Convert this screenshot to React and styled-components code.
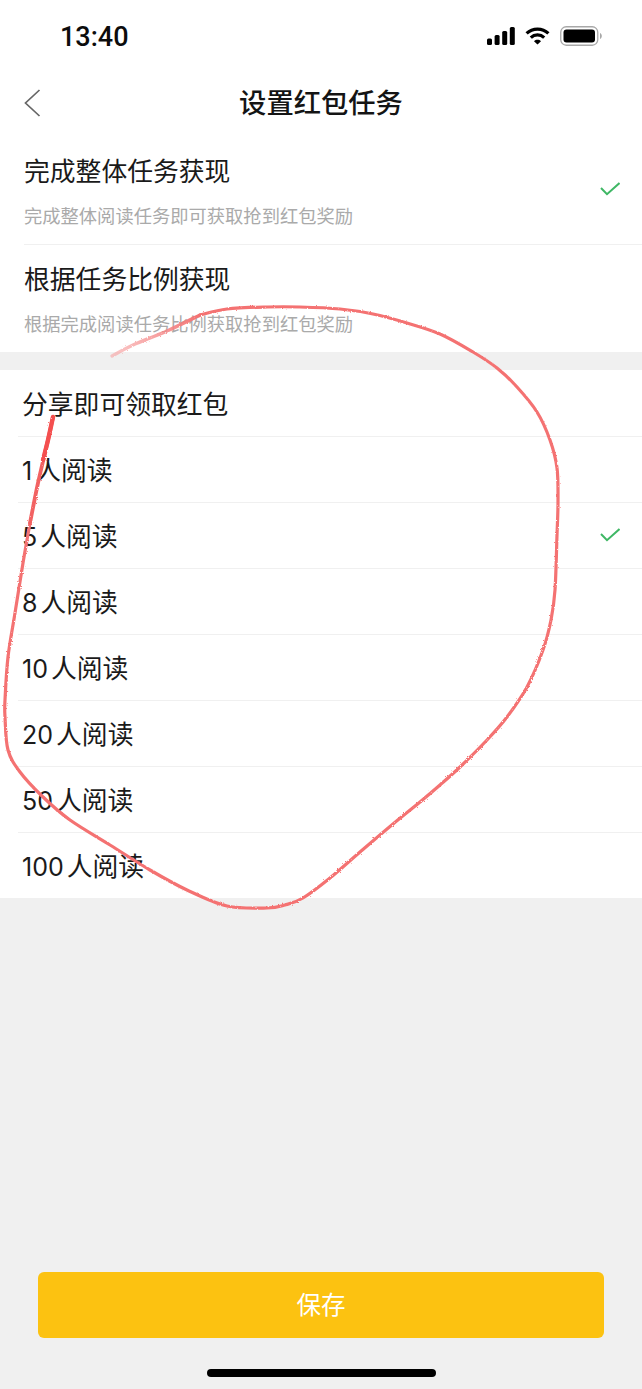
import React from "react";
import styled, { createGlobalStyle } from "styled-components";

const GlobalStyle = createGlobalStyle`
  html, body {
    margin: 0;
    padding: 0;
    background: #f0f0f0;
  }
  * {
    box-sizing: border-box;
  }
`;

const Page = styled.div`
  position: relative;
  display: flex;
  flex-direction: column;
  width: 642px;
  height: 1389px;
  overflow: hidden;
  background: #f0f0f0;
  color: #1a1a1a;
  font-family: "Inter", "Noto Sans CJK SC", sans-serif;
`;

const Header = styled.header`
  background: #fff;
`;

const StatusBar = styled.div`
  display: flex;
  align-items: center;
  justify-content: space-between;
  height: 70px;
  padding: 2px 40px 0 60px;
`;

const Time = styled.span`
  padding-top: 2px;
  font-family: "Roboto", sans-serif;
  font-size: 27px;
  font-weight: 500;
  color: #0c0c0c;
`;

const StatusIcons = styled.div`
  display: flex;
  align-items: center;
  gap: 10px;
`;

const Nav = styled.div`
  display: grid;
  grid-template-columns: 64px 1fr 64px;
  align-items: center;
  height: 66px;
`;

const BackButton = styled.button`
  display: flex;
  align-items: center;
  height: 100%;
  padding: 0 0 0 24px;
  border: 0;
  background: none;
`;

const NavTitle = styled.h1`
  margin: 0;
  padding-top: 2px;
  font-size: 27.3px;
  font-weight: 500;
  line-height: 36px;
  text-align: center;
  color: #141414;
`;

const Section = styled.section`
  background: #fff;
  margin-bottom: ${(p) => p.$gap || 0}px;
`;

const Row = styled.div`
  display: flex;
  align-items: center;
  justify-content: space-between;
  height: ${(p) => p.$height}px;
  margin-left: ${(p) => p.$inset}px;
  padding: ${(p) => p.$top || 0}px 22px 0 ${(p) => p.$pad || 0}px;
  border-top: 1px solid #f0f0f0;
  &:first-child {
    border-top-color: transparent;
  }
`;

const RowText = styled.div`
  display: flex;
  flex-direction: column;
  gap: 14px;
`;

const RowTitle = styled.span`
  font-size: 25.8px;
  line-height: 36px;
  color: #1a1a1a;
`;

const RowHint = styled.span`
  font-size: 18.3px;
  line-height: 24px;
  color: #aaa;
`;

const Count = styled.span`
  margin-right: 3px;
  font-size: 25px;
`;

const Footer = styled.footer`
  display: flex;
  flex-direction: column;
  align-items: center;
  margin-top: auto;
  padding: 0 38px 12px;
`;

const SaveButton = styled.button`
  width: 100%;
  height: 66px;
  padding: 0 0 4px;
  border: 0;
  border-radius: 6px;
  background: #fcc211;
  color: #fff;
  font-family: inherit;
  font-size: 24.5px;
`;

const HomeBar = styled.div`
  width: 229px;
  height: 8px;
  margin-top: 31px;
  border-radius: 4px;
  background: #000;
`;

const Scribble = styled.svg`
  position: absolute;
  top: 0;
  left: 0;
  pointer-events: none;
`;

const CheckMark = styled.svg`
  margin-bottom: 3px;
`;

const Signal = () => (
  <svg width="28.5" height="18" viewBox="0 0 28.5 18">
    <rect x="0" y="11.5" width="5" height="6.5" rx="1.5" fill="#000" />
    <rect x="7.6" y="8" width="5" height="10" rx="1.5" fill="#000" />
    <rect x="15.2" y="4" width="5" height="14" rx="1.5" fill="#000" />
    <rect x="22.8" y="0" width="5" height="18" rx="1.5" fill="#000" />
  </svg>
);

const Wifi = () => (
  <svg width="25" height="18" viewBox="0 0 25 18" fill="none" stroke="#000" strokeWidth="3.2">
    <path d="M1.6 6.4C7.6 0.7 17.4 0.7 23.4 6.4" />
    <path d="M5.8 10.6C9.6 7 15.4 7 19.2 10.6" />
    <path d="M9 14.2L12.5 17.6L16 14.2C14 12.3 11 12.3 9 14.2Z" fill="#000" stroke="none" />
  </svg>
);

const Battery = () => (
  <svg width="42" height="20" viewBox="0 0 42 20">
    <rect x="0.75" y="0.75" width="37" height="18.5" rx="5.5" fill="none" stroke="#a8a8a8" strokeWidth="1.3" />
    <rect x="3.5" y="3.5" width="31.5" height="13" rx="3" fill="#000" />
    <path d="M40 7C41.2 7.6 41.8 8.6 41.8 10C41.8 11.4 41.2 12.4 40 13Z" fill="#a8a8a8" />
  </svg>
);

const BackIcon = () => (
  <svg width="17" height="28" viewBox="0 0 17 28" fill="none" stroke="#666" strokeWidth="1.7">
    <path d="M15.5 1L1.5 14L15.5 27" />
  </svg>
);

const Check = () => (
  <CheckMark width="20" height="14" viewBox="0 0 20 14" fill="none" stroke="#3fb765" strokeWidth="2">
    <path d="M1 6L7 12.2L19.5 1" />
  </CheckMark>
);

// points read off the hand drawn ring, in page pixels
const ring = [
  [200, 315], [227, 309], [267, 307], [300, 307], [340, 309], [373, 314], [407, 323], [440, 334],
  [473, 352], [497, 368], [517, 387], [537, 412], [550, 440], [557, 468], [558, 502], [557, 535],
  [555, 590], [551, 620], [543, 650], [527, 687], [507, 717], [487, 740], [460, 767], [440, 785],
  [420, 802], [393, 824], [360, 852], [330, 878], [303, 898], [285, 905], [267, 908], [227, 906],
  [187, 890], [150, 870], [110, 845], [70, 820], [43, 797], [20, 772], [8, 750], [5, 717],
  [5, 700], [8, 657], [15, 613], [23, 563], [30, 523],
];
const ringEnd = [[30, 523], [38, 483], [48, 440], [53, 417]];
const ringTip = [[43, 460], [48, 440], [53, 417]];
const ringStart = [[112, 356], [133, 345], [167, 331], [200, 315]];

// catmull-rom through the points, so the line has no corners
const smooth = (pts) => {
  let d = `M${pts[0][0]} ${pts[0][1]}`;
  for (let i = 0; i < pts.length - 1; i++) {
    const p0 = pts[i - 1] || pts[i];
    const p1 = pts[i];
    const p2 = pts[i + 1];
    const p3 = pts[i + 2] || p2;
    const c1x = p1[0] + (p2[0] - p0[0]) / 6;
    const c1y = p1[1] + (p2[1] - p0[1]) / 6;
    const c2x = p2[0] - (p3[0] - p1[0]) / 6;
    const c2y = p2[1] - (p3[1] - p1[1]) / 6;
    d += `C${c1x} ${c1y} ${c2x} ${c2y} ${p2[0]} ${p2[1]}`;
  }
  return d;
};

const tasks = [
  { title: "完成整体任务获现", hint: "完成整体阅读任务即可获取抢到红包奖励", checked: true },
  { title: "根据任务比例获现", hint: "根据完成阅读任务比例获取抢到红包奖励" },
];

const options = [
  { label: "分享即可领取红包" },
  { count: 1, label: "人阅读" },
  { count: 5, label: "人阅读", checked: true },
  { count: 8, label: "人阅读" },
  { count: 10, label: "人阅读" },
  { count: 20, label: "人阅读" },
  { count: 50, label: "人阅读" },
  { count: 100, label: "人阅读" },
];

export default function App() {
  return (
    <Page>
      <GlobalStyle />
      <Header>
        <StatusBar>
          <Time>13:40</Time>
          <StatusIcons>
            <Signal />
            <Wifi />
            <Battery />
          </StatusIcons>
        </StatusBar>
        <Nav>
          <BackButton aria-label="返回">
            <BackIcon />
          </BackButton>
          <NavTitle>设置红包任务</NavTitle>
        </Nav>
      </Header>

      <Section $gap={18}>
        {tasks.map((t) => (
          <Row key={t.title} $height={108} $inset={24}>
            <RowText>
              <RowTitle>{t.title}</RowTitle>
              <RowHint>{t.hint}</RowHint>
            </RowText>
            {t.checked && <Check />}
          </Row>
        ))}
      </Section>

      <Section>
        {options.map((o) => (
          <Row key={o.label + (o.count || "")} $height={66} $inset={18} $pad={4} $top={2}>
            <RowTitle>
              {o.count && <Count>{o.count}</Count>}
              {o.label}
            </RowTitle>
            {o.checked && <Check />}
          </Row>
        ))}
      </Section>

      <Footer>
        <SaveButton>保存</SaveButton>
        <HomeBar />
      </Footer>

      <Scribble width="642" height="1389" viewBox="0 0 642 1389" fill="none" strokeLinecap="round">
        <defs>
          <linearGradient id="fade" gradientUnits="userSpaceOnUse" x1="112" y1="356" x2="200" y2="315">
            <stop offset="0" stopColor="#f7a3a3" stopOpacity="0.6" />
            <stop offset="1" stopColor="#f47272" />
          </linearGradient>
          <filter id="pencil" x="-5%" y="-5%" width="110%" height="110%">
            <feTurbulence type="fractalNoise" baseFrequency="0.8" numOctaves="2" seed="4" />
            <feDisplacementMap in="SourceGraphic" scale="2.4" />
            <feGaussianBlur stdDeviation="0.5" />
          </filter>
        </defs>
        <g filter="url(#pencil)">
          <path d={smooth(ringStart)} stroke="url(#fade)" strokeWidth="3.4" />
          <path d={smooth(ring)} stroke="#f47272" strokeWidth="3.2" />
          <path d={smooth(ringEnd)} stroke="#f26262" strokeWidth="3.8" />
          <path d={smooth(ringTip)} stroke="#f44f4f" strokeWidth="4.4" />
        </g>
      </Scribble>
    </Page>
  );
}
